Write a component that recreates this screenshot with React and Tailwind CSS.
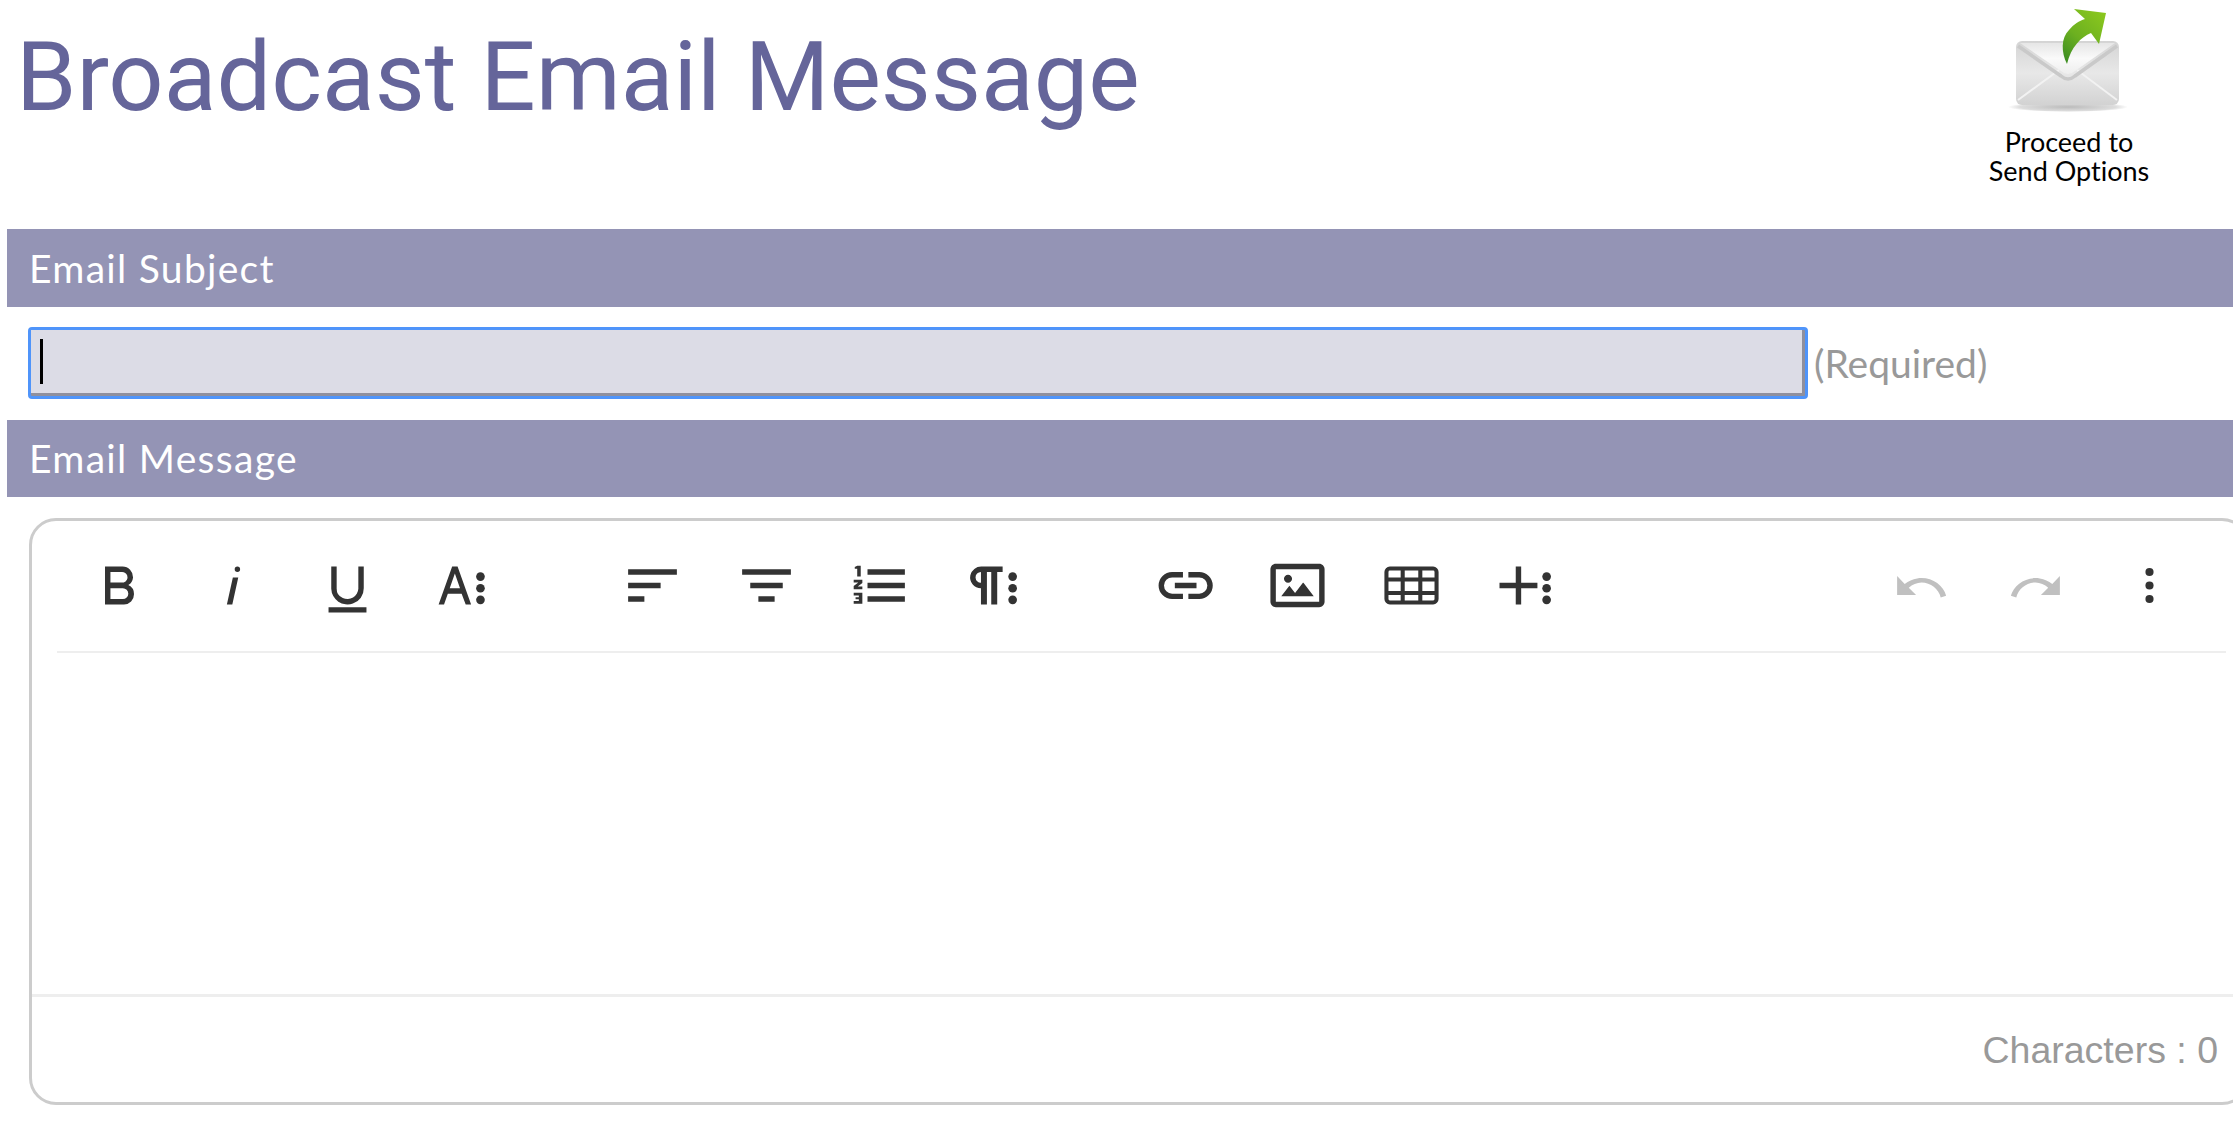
const I = ({ d, c = "#333333", children, tf }) => (
  <span className="flex h-[65px] w-[114px] items-center justify-center">
    <svg width="65" height="65" viewBox="0 0 24 24" fill={c}>
      <g transform={tf}>
        {d && <path d={d} />}
        {children}
      </g>
    </svg>
  </span>
);

const Dots = ({ x }) => (
  <>
    <circle cx={x} cy="8.7" r="1.6" />
    <circle cx={x} cy="13" r="1.6" />
    <circle cx={x} cy="17.3" r="1.6" />
  </>
);

const UNDO = "M10.4,9.4c-1.7,0.3-3.2,0.9-4.6,2L3,8.5v7h7l-2.7-2.7c1.3-1.1,3-1.9,4.7-1.9c3.4,0,6.3,2.4,7.1,5.5l2-.6C20,11.7,15.4,8.6,10.4,9.4z";

function Envelope() {
  return (
    <svg width="140" height="116" viewBox="0 0 140 116">
      <defs>
        <linearGradient id="env" x1="0" y1="0" x2="0" y2="1">
          <stop offset="0" stopColor="#d4d4d4" />
          <stop offset="0.5" stopColor="#e8e8e8" />
          <stop offset="1" stopColor="#d2d2d2" />
        </linearGradient>
        <linearGradient id="flap" x1="0" y1="0" x2="0" y2="1">
          <stop offset="0" stopColor="#e6e6e6" />
          <stop offset="0.5" stopColor="#fafafa" />
          <stop offset="1" stopColor="#eeeeee" />
        </linearGradient>
        <linearGradient id="arrow" x1="0.9" y1="0" x2="0.2" y2="1">
          <stop offset="0" stopColor="#8cc81e" />
          <stop offset="0.6" stopColor="#6cb020" />
          <stop offset="1" stopColor="#3f8f22" />
        </linearGradient>
        <radialGradient id="sh">
          <stop offset="0" stopColor="#bbbbbb" />
          <stop offset="0.8" stopColor="#dddddd" />
          <stop offset="1" stopColor="#ffffff" />
        </radialGradient>
      </defs>
      <ellipse cx="69" cy="107" rx="60" ry="5" fill="url(#sh)" />
      <rect x="17" y="41" width="103" height="64" rx="6" fill="url(#env)" />
      <path d="M19 100 L60 70 M118 100 L78 70" stroke="#f2f2f2" strokeWidth="2" fill="none" />
      <path d="M21 43 H116 L76 71 Q69 77 62 71 Z" fill="url(#flap)" />
      <path d="M19 46 L62 76 Q69 82 76 76 L118 46" stroke="#c9c9c9" strokeWidth="3.5" fill="none" />
      <path d="M75 9 L107 13 L100 44 L92 33 C82 37 72 47 68 64 C62 52 62 38 70 30 C75 24 80 21 86 19 Z" fill="url(#arrow)" />
    </svg>
  );
}

function SectionBar({ children, h }) {
  return (
    <div className={`ml-[7px] flex items-center bg-[#9494b5] pl-[22px] text-[39px] tracking-[1.3px] text-white ${h}`}>
      {children}
    </div>
  );
}

export default function App() {
  return (
    <div className="h-[1125px] w-[2233px] overflow-hidden bg-white font-['Lato',sans-serif] [font-variant-ligatures:none]">
      <div className="flex h-[229px] items-start justify-between">
        <h1 className="pl-[16px] pt-[9px] font-['Roboto',sans-serif] text-[97px] font-normal leading-[136px] text-[#65659a]">
          Broadcast Email Message
        </h1>
        <div className="mr-[64px] flex w-[200px] flex-col items-center text-center text-[27px] leading-[28.5px] text-black">
          <Envelope />
          <div className="mt-[12px]">
            Proceed to
            <br />
            Send Options
          </div>
        </div>
      </div>

      <SectionBar h="h-[78px]">Email Subject</SectionBar>

      <div className="mb-[21px] ml-[28px] mt-[20px] flex items-center">
        <div className="h-[72px] w-[1780px] rounded-[4px] border-[3px] border-[#4f94fa] bg-[#8f8f9d] pb-[3px] pr-[3px]">
          <div className="flex h-full items-center bg-[#dcdce6] pl-[9px]">
            <div className="h-[45px] w-[3px] bg-black" />
          </div>
        </div>
        <span className="ml-[6px] text-[39px] text-[#999999]">(Required)</span>
      </div>

      <SectionBar h="h-[77px]">Email Message</SectionBar>

      <div className="ml-[29px] mt-[21px] flex h-[587px] w-[2220px] flex-col rounded-[27px] border-[3px] border-[#cccccc]">
        <div className="ml-[25px] mr-[20px] flex h-[132px] items-center border-b-2 border-[#eeeeee] pb-[2px]">
          <div className="ml-[5px] mr-[77px] flex">
            <I d="M15.25,11.8h0A3.68,3.68,0,0,0,17,9a3.93,3.93,0,0,0-3.86-4H6.65V19h7a3.74,3.74,0,0,0,3.7-3.78V15.1A3.64,3.64,0,0,0,15.25,11.8ZM8.65,7h4.2a2.09,2.09,0,0,1,2,1.3,2.09,2.09,0,0,1-1.3,2.61H8.65Zm4.6,10H8.65V13h4.6a2.05,2.05,0,0,1,2,2A2.05,2.05,0,0,1,13.25,17Z" />
            <I d="M11.76,9h2l-2.2,10h-2Zm1.68-4a1,1,0,1,0,1,1,1,1,0,0,0-1-1Z" />
            <I d="M19,20v2H5V20Zm-3-6.785a4,4,0,0,1-5.74,3.4A3.75,3.75,0,0,1,8,13.085V5.005H6v8.21a6,6,0,0,0,8,5.44,5.851,5.851,0,0,0,4-5.65v-8H16Z" />
            <I d="M13.55,19h2l-5-14h-2l-5,14h2l1.4-4h5.1Zm-5.9-6,1.9-5.4,1.9,5.4Z"><Dots x={19} /></I>
          </div>
          <div className="mr-[75px] flex">
            <I d="M3,18h6v-2H3V18z M3,11v2h12v-2H3z M3,6v2h18V6H3z" />
            <I d="M9,18h6v-2H9V18z M6,11v2h12v-2H6z M3,6v2h18V6H3z" />
            <I d="M7.2,6H21V8H7.2Zm0,5H21v2H7.2Zm0,5H21v2H7.2ZM3.4,4.7h1.3V8.7H3.4V5.8H2.5V5.2ZM2.1,9.9H5.3v1.2L3.6,12.4H5.3v1H2.1V12.2L3.8,10.9H2.1Zm0,4.8H5.3v4H2.1v-1H4v-.6H2.8v-.8H4v-.6H2.1Z" />
            <I>
              <path transform="translate(-3 0)" d="M10.15,5A4.11,4.11,0,0,0,6.08,8.18,4,4,0,0,0,10,13v6h2.2V7h1.6V19H16V7h2V5ZM10,11a2,2,0,0,1-2-1.95A2,2,0,0,1,10,7Z" />
              <Dots x={18.7} />
            </I>
          </div>
          <div className="flex">
            <I tf="translate(0.8 0)" d="M11,7H7a5,5,0,0,0,0,10h4v-2H7a3,3,0,0,1,0-6h4Zm6,0H13v2h4a3,3,0,0,1,0,6H13v2h4a5,5,0,0,0,0-10ZM8,11v2h8V11Z" />
            <I d="M14.2,11l3.8,5H6l3-3.9l2.1,2.7L14,11H14.2z M8.5,11c0.8,0,1.5-0.7,1.5-1.5S9.3,8,8.5,8S7,8.7,7,9.5C7,10.3,7.7,11,8.5,11z M22,6v12c0,1.1-0.9,2-2,2H4c-1.1,0-2-0.9-2-2V6c0-1.1,0.9-2,2-2h16C21.1,4,22,4.9,22,6z M20,8.8V6H4v12h16V8.8z" />
            <I d="M20,5H4A2,2,0,0,0,2,7V17a2,2,0,0,0,2,2H20a2,2,0,0,0,2-2V7A2,2,0,0,0,20,5ZM8,17.5H4a.5.5,0,0,1-.5-.5V15.5H8Zm0-3.5H3.5V10.5H8ZM8,9H3.5V7A.5.5,0,0,1,4,6.5H8Zm6.5,8.5h-5v-2h5Zm0-3.5h-5V10.5h5Zm0-5h-5V6.5h5ZM20.5,17a.5.5,0,0,1-.5.5H16v-2h4.5Zm0-3H16V10.5h4.5Zm0-5H16V6.5h4a.5.5,0,0,1,.5.5Z" />
            <I d="M10.4,5h-2v6h-6v2h6v6h2V13h6V11h-6Z"><Dots x={19.8} /></I>
          </div>
          <div className="ml-auto mr-[20px] flex">
            <I d={UNDO} c="#c0c0c0" />
            <I d={UNDO} c="#c0c0c0" tf="matrix(-1 0 0 1 24 0)" />
            <I>
              <circle cx="12" cy="7" r="1.5" />
              <circle cx="12" cy="12" r="1.5" />
              <circle cx="12" cy="17" r="1.5" />
            </I>
          </div>
        </div>
        <div className="flex-1" />
        <div className="flex h-[108px] items-center justify-end border-t-[3px] border-[#eeeeee] pr-[28px] pt-[2px] font-['Liberation_Sans',sans-serif] text-[37.5px] text-[#999999]">
          Characters : 0
        </div>
      </div>
    </div>
  );
}
